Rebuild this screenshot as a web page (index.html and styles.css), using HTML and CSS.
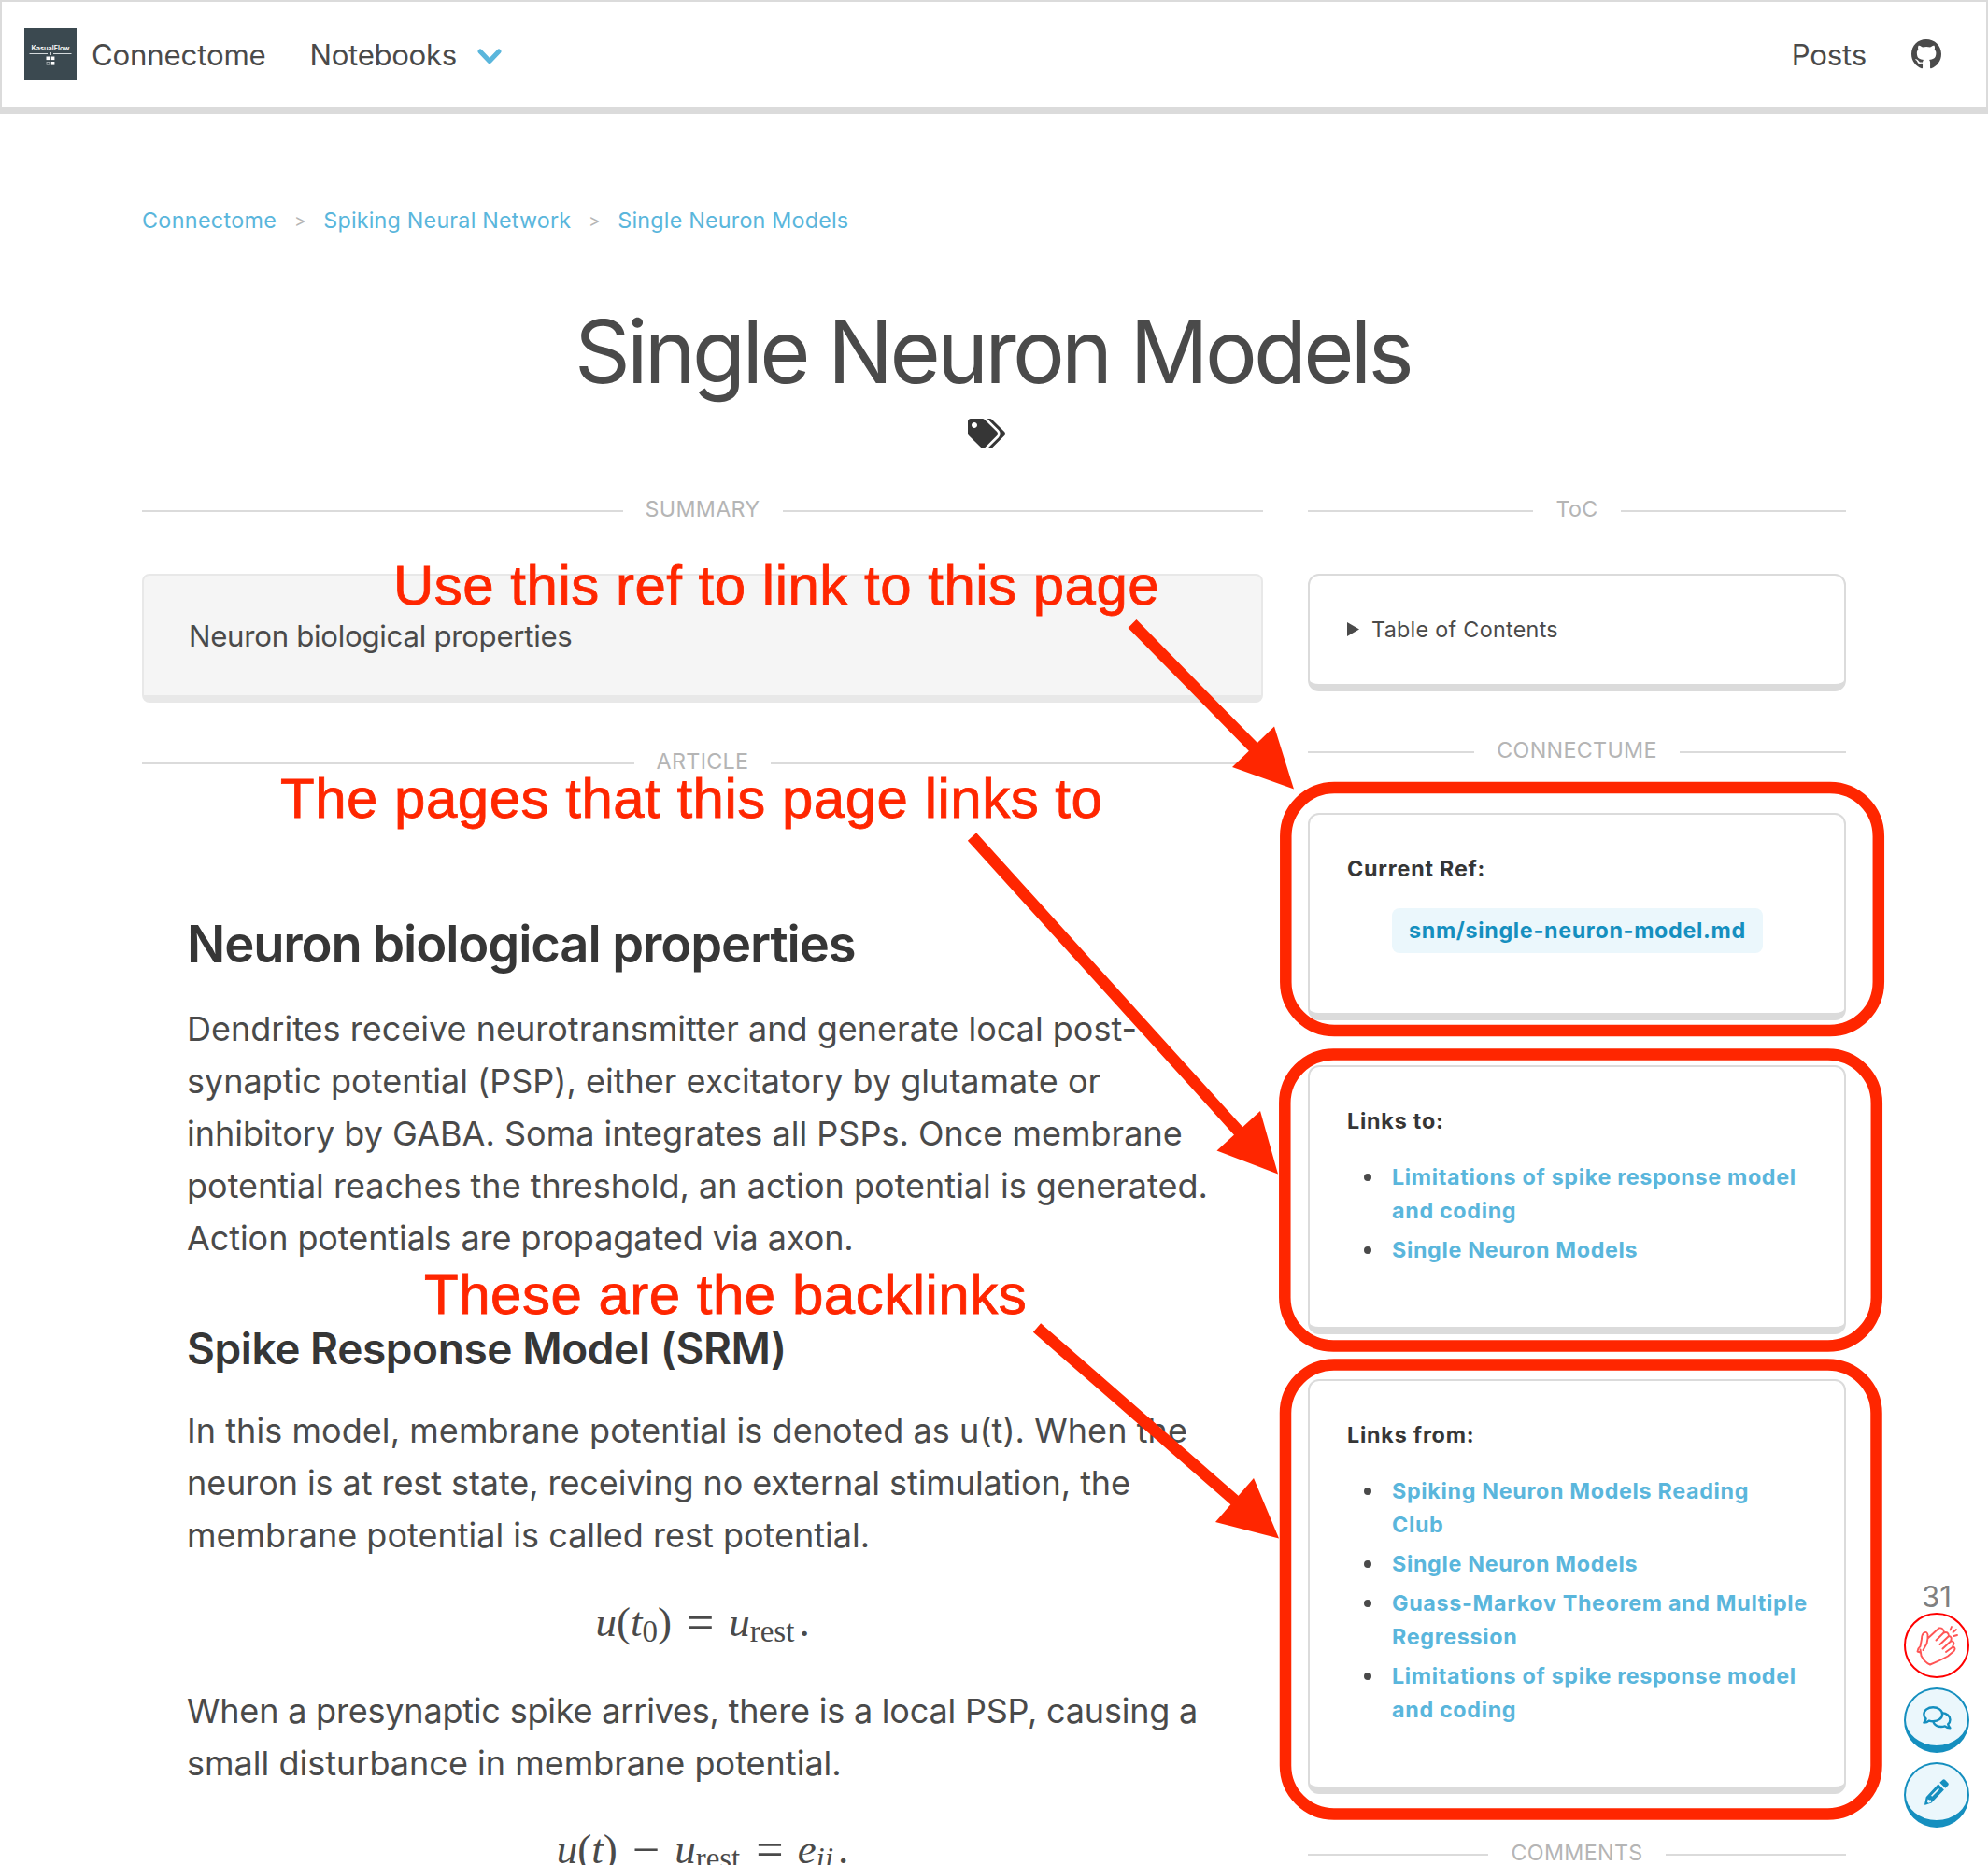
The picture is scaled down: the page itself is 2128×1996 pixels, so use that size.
FILE: index.html
```html
<!DOCTYPE html>
<html lang="en">
<head>
<meta charset="utf-8">
<title>Single Neuron Models</title>
<link rel="stylesheet" href="styles.css">
</head>
<body>
<nav class="navbar">
  <a class="brand">
    <svg class="logo" viewBox="0 0 56 56"><rect width="56" height="56" fill="#3b4950"/><text x="28" y="23.500" text-anchor="middle" textLength="41" lengthAdjust="spacingAndGlyphs" class="logo-text">KasualFlow</text><path d="M5.500 27.500H25M31 27.500H50.500" stroke="#d5dadc" stroke-width="1.200"/><path d="M28 26v3" stroke="#fff" stroke-width="1.500"/><g fill="#fff"><rect x="23.500" y="30.500" width="3.600" height="3.600"/><rect x="28.800" y="30.500" width="3.600" height="3.600"/><rect x="28.800" y="36" width="3.600" height="3.600"/></g><rect x="24" y="36.400" width="2.800" height="2.800" fill="none" stroke="#aab2b5" stroke-width=".8"/></svg>
    <span class="nav-text">Connectome</span>
  </a>
  <a class="nav-drop"><span class="nav-text">Notebooks</span>
    <svg class="chevron" viewBox="0 0 26 17"><path d="M3 3l10 10.500L23 3" fill="none" stroke="#5ab6dc" stroke-width="5" stroke-linecap="round" stroke-linejoin="round"/></svg>
  </a>
  <a class="nav-end nav-text">Posts</a>
  <svg class="github" viewBox="0 0 496 496"><path fill="#4a4a4a" d="M165.900 389.400c0 2-2.300 3.600-5.200 3.600-3.300.3-5.600-1.300-5.600-3.600 0-2 2.300-3.600 5.200-3.600 3-.3 5.600 1.300 5.600 3.600zm-31.100-4.500c-.7 2 1.300 4.300 4.300 4.900 2.600 1 5.600 0 6.200-2s-1.300-4.300-4.300-5.200c-2.600-.7-5.500.3-6.200 2.300zm44.200-1.700c-2.900.7-4.900 2.600-4.600 4.900.3 2 2.900 3.300 5.900 2.600 2.900-.7 4.900-2.600 4.600-4.600-.3-1.900-3-3.200-5.900-2.900zM244.800 0C106.100 0 0 105.300 0 244c0 110.900 69.800 205.800 169.500 239.200 12.800 2.300 17.300-5.600 17.300-12.100 0-6.200-.3-40.400-.3-61.400 0 0-70 15-84.700-29.800 0 0-11.400-29.100-27.800-36.600 0 0-22.900-15.700 1.600-15.400 0 0 24.900 2 38.600 25.800 21.900 38.600 58.600 27.500 72.900 20.900 2.300-16 8.800-27.100 16-33.700-55.900-6.200-112.300-14.300-112.300-110.500 0-27.500 7.600-41.300 23.600-58.900-2.600-6.500-11.100-33.300 2.600-67.900 20.900-6.500 69 27 69 27 20-5.600 41.500-8.500 62.800-8.500s42.800 2.900 62.800 8.500c0 0 48.100-33.600 69-27 13.700 34.700 5.200 61.400 2.600 67.900 16 17.700 25.800 31.500 25.800 58.900 0 96.500-58.900 104.200-114.800 110.500 9.200 7.900 17 22.900 17 46.400 0 33.700-.3 75.400-.3 83.600 0 6.500 4.600 14.400 17.300 12.100C428.200 449.800 496 354.900 496 244 496 105.300 383.500 0 244.800 0z"/></svg>
</nav>

<main class="page">
  <div class="breadcrumb">
    <a class="root">Connectome</a><i>&gt;</i><a>Spiking Neural Network</a><i>&gt;</i><a>Single Neuron Models</a>
  </div>
  <h1>Single Neuron Models</h1>
  <div class="tags"><svg viewBox="0 0 640 512"><path fill="#363636" d="M497.900 225.900L286.100 14.100A48 48 0 0 0 252.100 0H48C21.500 0 0 21.500 0 48v204.100a48 48 0 0 0 14.100 33.900l211.800 211.900c18.700 18.700 49.100 18.700 67.900 0l204.100-204.100c18.700-18.700 18.700-49.100 0-67.900zM112 160c-26.500 0-48-21.500-48-48s21.500-48 48-48 48 21.500 48 48-21.500 48-48 48zm513.900 133.800L421.800 497.900c-18.700 18.700-49.100 18.700-67.900 0l-.4-.4L527.600 323.500a90 90 0 0 0 0-127.300L331.400 0h48.700a48 48 0 0 1 33.900 14.100l211.900 211.800c18.700 18.700 18.700 49.100 0 67.900z"/></svg></div>

  <div class="columns">
    <section class="content">
      <div class="divider"><span>SUMMARY</span></div>
      <div class="summary">Neuron biological properties</div>
      <div class="divider after-box"><span>ARTICLE</span></div>
      <article>
        <h2>Neuron biological properties</h2>
        <p>Dendrites receive neurotransmitter and generate local post-<br>synaptic potential (PSP), either excitatory by glutamate or<br>inhibitory by GABA. Soma integrates all PSPs. Once membrane<br>potential reaches the threshold, an action potential is generated.<br><span class="snug">Action potentials are propagated via axon.</span></p>
        <h3>Spike Response Model (SRM)</h3>
        <p><span class="loose">In this model, membrane potential is denoted as u(t). When the</span><br><span class="snug">neuron is at rest state, receiving no external stimulation, the</span><br>membrane potential is called rest potential.</p>
        <div class="math"><i>u</i>(<i>t</i><sub>0</sub>)<b>=</b><i>u</i><sub>rest</sub><span class="dot">.</span></div>
        <p><span class="tight">When a presynaptic spike arrives, there is a local PSP, causing a</span><br>small disturbance in membrane potential.</p>
        <div class="math last"><i>u</i>(<i>t</i>)<b>−</b><i>u</i><sub>rest</sub><b class="wide">=</b><i>e</i><sub><i>ij</i></sub><span class="dot">.</span></div>
      </article>
    </section>
    <aside>
      <div class="divider"><span>ToC</span></div>
      <div class="box toc"><svg viewBox="0 0 13 15"><path d="M0 0l13 7.500L0 15z" fill="#4a4a4a"/></svg><span>Table of Contents</span></div>
      <div class="divider after-box"><span>CONNECTUME</span></div>
      <div class="box current"><strong>Current Ref:</strong><div class="tag">snm/single-neuron-model.md</div></div>
      <div class="box links-to"><strong>Links to:</strong>
        <ul>
          <li><a>Limitations of spike response model<br>and coding</a></li>
          <li><a>Single Neuron Models</a></li>
        </ul>
      </div>
      <div class="box links-from"><strong>Links from:</strong>
        <ul>
          <li><a>Spiking Neuron Models Reading<br>Club</a></li>
          <li><a>Single Neuron Models</a></li>
          <li><a>Guass-Markov Theorem and Multiple<br>Regression</a></li>
          <li><a>Limitations of spike response model<br>and coding</a></li>
        </ul>
      </div>
      <div class="divider after-box"><span>COMMENTS</span></div>
    </aside>
  </div>
</main>

<div class="actions">
  <div class="count">31</div>
  <button class="round clap"><svg viewBox="0 0 42 42" fill="none" stroke="#f55" stroke-width="1.900" stroke-linecap="round" stroke-linejoin="round"><path d="M3.500 25.500L4.500 32Q8 39 14 41.500Q25 37 33 32.500L39.500 27Q42 23.500 38.500 22.500L31 28M38 22.500L39.500 19Q39 15.500 35.500 17L27.500 24.500M36 16.500Q38 11.500 34 11L24.500 20M34 11Q33.500 5.500 28.500 7.500L20.500 15.500M29 7Q28 1.500 23.500 2.500L11.500 13.500V9.500Q10.500 5.500 7.500 7.500Q5 9.500 5 14L3.500 22Q.5 24.500 .5 27.500L3.500 28.500M11.500 13.500L10.500 19L6.500 26"/><path d="M37 1l-1.500 3.500M42 4l-3.500 3M43 10l-3.500 1"/></svg></button>
  <button class="round"><svg class="chat" viewBox="0 0 32 26" fill="none" stroke="#158fbf" stroke-width="2.500" stroke-linejoin="round"><path d="M11.500 1.300C5.800 1.300 1.300 4.600 1.300 9c0 2 .9 3.700 2.300 5-.3 1.700-1 2.900-2.200 4.200 2.200 0 4.300-.8 5.700-2 1.400.5 2.900.7 4.400.7 5.700 0 10.300-3.500 10.300-7.900s-4.600-7.700-10.300-7.700z"/><path d="M21.500 7.400c5.200.4 9 3.600 9 7.600 0 2-.9 3.700-2.300 5 .3 1.700 1 2.900 2.200 4.200-2.200 0-4.300-.8-5.700-2-1.400.5-2.600.7-4.100.7-4 0-7.300-1.900-8.800-5.300"/></svg></button>
  <button class="round"><svg class="pencil" viewBox="0 0 26 28"><path fill="#158fbf" fill-rule="evenodd" d="M19.500.8q1.200-1.100 2.400 0l3.400 3.500q1 1.200 0 2.400l-3 3-6-6zM14.700 5.300l6.200 6.200L7.500 25.500.8 27.700q-.9.200-.7-.7l1.600-7.700zM3.600 21.500L3 24.800l1.300 1 2.900-1-.2-2.200-1.700-.2zM7 17.800l1.200 1 7.800-7.800-1.200-1.200z"/></svg></button>
</div>

<svg class="annotations" viewBox="0 0 2128 1996">
  <g fill="none" stroke="#ff2600" stroke-width="12.500">
    <rect x="1376.300" y="843" width="634.500" height="260" rx="52"/>
    <rect x="1375.300" y="1128.500" width="633.500" height="312" rx="52"/>
    <rect x="1376" y="1460.500" width="632.500" height="481" rx="52"/>
    <path d="M1212 667.500L1343 801M1040.500 895.500L1327 1212M1110 1421L1322 1606"/>
  </g>
  <g fill="#ff2600">
    <path d="M1385 844.500L1364 777.500L1319 821z"/>
    <path d="M1368 1256.600L1349 1189L1302.500 1231.500z"/>
    <path d="M1369 1646.500L1342 1582L1301 1629z"/>
    <text x="421" y="646.500">Use this ref to link to this page</text>
    <text x="300" y="874.500">The pages that this page links to</text>
    <text x="454" y="1405.500">These are the backlinks</text>
  </g>
</svg>
</body>
</html>
```
FILE: styles.css
```css
* { box-sizing: border-box; }
html, body { margin: 0; }
body {
  position: relative;
  width: 2128px;
  height: 1996px;
  overflow: hidden;
  background: #fff;
  color: #4a4a4a;
  font-family: Inter, "Liberation Sans", sans-serif;
  white-space: nowrap;
}
h1, h2, h3, p, ul { margin: 0; padding: 0; }

.navbar {
  display: flex;
  align-items: center;
  height: 122px;
  padding: 0 48px 0 24px;
  border: 2px solid #dbdbdb;
  border-bottom-width: 8px;
}
.brand, .nav-drop { display: flex; align-items: center; }
.logo { width: 56px; height: 56px; margin-right: 16px; }
.logo-text { font: 600 7px Inter, sans-serif; fill: #fff; }
.nav-text { font-size: 31.200px; line-height: 48px; letter-spacing: -0.006em; padding-top: 2px; }
.nav-drop { margin-left: 47px; }
.nav-drop .nav-text { letter-spacing: -0.011em; }
.chevron { width: 26px; height: 17px; margin: 4px 0 0 22px; }
.nav-end { margin-left: auto; }
.github { width: 32px; height: 32px; margin-left: 48px; }

.page { padding: 0 152px; }
.breadcrumb {
  display: flex;
  height: 36px;
  margin-top: 96px;
  font-size: 23.300px;
  line-height: 36px;
  letter-spacing: 0.009em;
  color: #5ab6dc;
}
.breadcrumb .root { letter-spacing: 0.015em; }
.breadcrumb i {
  width: 50px;
  text-align: center;
  font-style: normal;
  font-size: 19px;
  line-height: 38px;
  color: #b5b5b5;
}
h1 {
  margin-top: 68px;
  padding-right: 3px;
  font-size: 93.200px;
  line-height: 108px;
  font-weight: 400;
  letter-spacing: -0.041em;
  text-align: center;
}
.tags { display: flex; justify-content: center; margin-top: 18px; padding-right: 16px; }
.tags svg { width: 40px; height: 32px; }

.columns {
  display: grid;
  grid-template-columns: 1200px 576px;
  column-gap: 48px;
  margin-top: 49px;
}
.divider {
  display: flex;
  align-items: center;
  gap: 24px;
  height: 36px;
  margin-bottom: 49px;
  font-size: 23.300px;
  line-height: 32px;
  letter-spacing: 0.014em;
  color: #b5b5b5;
}
.divider::before, .divider::after { content: ""; flex: 1; height: 2px; background: #dbdbdb; }
.divider span { margin-bottom: 4px; }
.after-box { margin: 47px 0; }

.summary {
  height: 138px;
  padding: 41px 48px;
  border: 2px solid #e8e8e8;
  border-bottom-width: 8px;
  border-radius: 8px;
  background: #f5f5f5;
  font-size: 31.200px;
  line-height: 48px;
  letter-spacing: -0.009em;
}
article { padding-left: 48px; margin-top: 143px; }
h2, h3 { color: #363636; font-weight: 600; }
h2 { font-size: 54.300px; line-height: 64px; margin-bottom: 31px; letter-spacing: -0.020em; }
h3 { font-size: 46px; line-height: 54px; margin: 63px 0 33px; letter-spacing: -0.009em; }
p { font-size: 36px; line-height: 56px; letter-spacing: 0.0003em; }
.loose { letter-spacing: 0.0017em; }
.snug { letter-spacing: -0.002em; }
.tight { letter-spacing: -0.0055em; }

.math {
  height: 132px;
  margin-left: -48px;
  font: 45px/130px "Liberation Serif", serif;
  text-align: center;
}
.math.last { height: 81px; line-height: 128px; }
.math b { font-weight: 400; margin: 0 16px; font-size: 52px; line-height: 0; vertical-align: -3px; }
.math b.wide { margin-left: 17px; margin-right: 15px; }
.math sub { font-size: 33px; line-height: 0; vertical-align: -6px; }
.math .dot { margin-left: 5px; }

.box {
  padding: 40px;
  border: 2px solid #dbdbdb;
  border-bottom-width: 8px;
  border-radius: 12px;
  margin-bottom: 48px;
  font-size: 23.300px;
  line-height: 36px;
  letter-spacing: 0.029em;
}
.box strong { display: table; font-weight: 700; color: #363636; letter-spacing: 0.034em; }
.box.toc { height: 126px; margin: 0; display: flex; align-items: flex-start; letter-spacing: 0.013em; }
.toc svg { width: 13px; height: 15px; margin: 10px 13px 0 0; }
.box.current { height: 222px; }
.box.links-to { height: 288px; }
.box.links-from { height: 444px; margin-bottom: 0; }
.tag {
  display: table;
  height: 48px;
  margin: 24px 0 0 48px;
  padding: 0 18px;
  line-height: 48px;
  border-radius: 8px;
  background: #ebf7fc;
  color: #158fbf;
  font-weight: 700;
}
.box ul { margin: 24px 0 0 48px; list-style: none; font-weight: 700; color: #5ab6dc; }
.box li { position: relative; }
.box li + li { margin-top: 6px; }
.box li::before {
  content: "";
  position: absolute;
  left: -30px;
  top: 14px;
  width: 8px;
  height: 8px;
  border-radius: 50%;
  background: #4a4a4a;
}

.actions {
  position: absolute;
  right: 20px;
  top: 1690px;
  width: 70px;
  display: flex;
  flex-direction: column;
  gap: 10px;
}
.count { height: 26px; font-size: 31.200px; line-height: 38px; text-align: center; color: #808080; }
.round {
  display: flex;
  align-items: center;
  justify-content: center;
  width: 70px;
  height: 70px;
  padding: 0;
  border: 2px solid #158fbf;
  border-bottom-width: 8px;
  border-radius: 50%;
  background: #ebf7fc;
}
.clap { border: 2px solid #f00; background: #fff; }
.clap svg { width: 42px; height: 42px; overflow: visible; }
.chat { width: 31px; height: 25px; }
.pencil { width: 26px; height: 28px; }

.annotations { position: absolute; left: 0; top: 0; width: 2128px; height: 1996px; }
.annotations text {
  font: 60px "Liberation Sans", sans-serif;
  letter-spacing: 0.5px;
  stroke: #ff2600;
  stroke-width: 0.8px;
}
```
